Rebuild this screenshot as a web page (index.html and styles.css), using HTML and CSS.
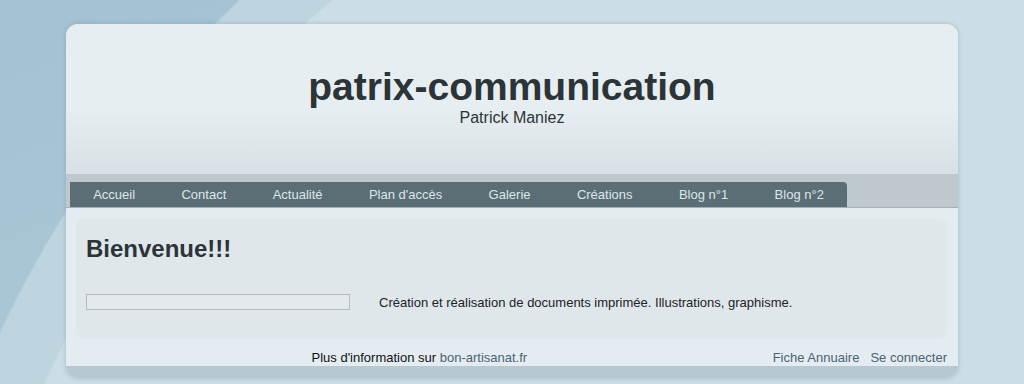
FILE: index.html
```html
<!DOCTYPE html>
<html lang="fr">
<head>
    <meta charset="UTF-8">
    <title>patrix-communication</title>
    <link rel="stylesheet" href="styles.css">
</head>
<body>
    <div class="page">
        <div class="header">
            <h1>patrix-communication</h1>
            <p class="slogan">Patrick Maniez</p>
        </div>
        <div class="nav">
            <a href="#" class="tab">Accueil</a>
            <a href="#" class="tab">Contact</a>
            <a href="#" class="tab">Actualité</a>
            <a href="#" class="tab">Plan d'accès</a>
            <a href="#" class="tab">Galerie</a>
            <a href="#" class="tab">Créations</a>
            <a href="#" class="tab">Blog n°1</a>
            <a href="#" class="tab last">Blog n°2</a>
        </div>
        <div class="main">
            <div class="content">
                <h2>Bienvenue!!!</h2>
                <div class="row">
                    <div class="picture"></div>
                    <p>Création et réalisation de documents imprimée. Illustrations, graphisme.</p>
                </div>
            </div>
            <div class="footer">
                <div class="info">Plus d'information sur <a href="#">bon-artisanat.fr</a></div>
                <div class="links">
                    <a href="#">Fiche Annuaire</a>
                    <a href="#">Se connecter</a>
                </div>
            </div>
        </div>
        <div class="bottom"></div>
    </div>
</body>
</html>
```

FILE: styles.css
```css
body {
    margin: 0;
    height: 384px;
    overflow: hidden;
    font-family: "Liberation Sans", Arial, sans-serif;
    background:
        radial-gradient(circle 1043px at 1000px 800px, #cbdde6 99.8%, rgba(203, 221, 230, 0) 100%),
        radial-gradient(circle 1105px at 1000px 800px, #bed4df 99.8%, rgba(190, 212, 223, 0) 100%),
        linear-gradient(160deg, #a2c1d3, #b3cdda);
}
.page {
    width: 892px;
    margin: 24px auto 0;
    border-radius: 12px;
    background: #e4ecf1;
    box-shadow: 0 0 4px rgba(90, 120, 140, 0.35);
    overflow: hidden;
}
.header {
    height: 150px;
    box-sizing: border-box;
    padding-top: 40px;
    text-align: center;
    background: linear-gradient(#e6edf0, #e7eef1 55%, #d8e0e5);
    color: #2c3438;
}
h1 {
    margin: 0;
    font-size: 39px;
    line-height: 45px;
}
.slogan {
    margin: 0;
    font-size: 16px;
    line-height: 18px;
}
.nav {
    display: flex;
    height: 34px;
    box-sizing: border-box;
    padding: 8px 0 0 4px;
    background: #bfc9cd;
    border-bottom: 1px solid #a3b2b9;
}
.tab {
    padding: 0 23.2px;
    line-height: 26px;
    font-size: 13px;
    color: #dde6ea;
    text-decoration: none;
    background: #5b6e75;
}
.tab.last {
    border-top-right-radius: 4px;
}
.main {
    padding: 11px 11px 0 10px;
}
.content {
    height: 120px;
    box-sizing: border-box;
    padding: 16px 10px 0;
    border-radius: 8px;
    background: #dfe7eb;
}
h2 {
    margin: 0;
    font-size: 24px;
    line-height: 28px;
    color: #2c3438;
}
.row {
    display: flex;
    align-items: center;
    gap: 29px;
    margin-top: 31px;
}
.picture {
    width: 262px;
    height: 14px;
    border: 1px solid #b3bbbf;
    background: #e3e9ec;
}
.row p {
    margin: 0;
    font-size: 13px;
    color: #222;
}
.footer {
    display: flex;
    height: 27px;
    box-sizing: border-box;
    padding-top: 11px;
    font-size: 13px;
    line-height: 16px;
    color: #111;
}
.info {
    flex: 1;
    text-align: center;
    margin-left: -10px;
}
.footer a {
    color: #4a6373;
    text-decoration: none;
}
.links {
    display: flex;
    gap: 11px;
}
.bottom {
    height: 12px;
    background: #b7c8d1;
}
```
